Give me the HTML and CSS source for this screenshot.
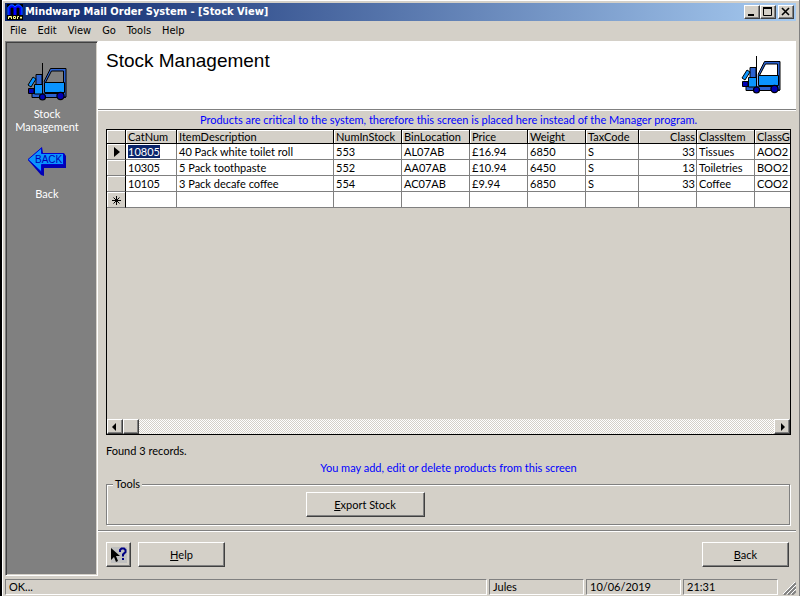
FILE: index.html
```html
<!DOCTYPE html>
<html lang="en">
<head>
<meta charset="utf-8">
<title>Mindwarp Mail Order System - [Stock View]</title>
<link rel="stylesheet" href="styles.css">
</head>
<body>
<svg class="defs" aria-hidden="true">
  <symbol id="forklift" viewBox="0 0 40 40">
    <path d="M9 12.500H15V32H9Z" fill="#2b62d0" stroke="#000"/>
    <path d="M6 15L9 17L4 25L1 23Z" fill="#0a94ff" stroke="#000"/>
    <path d="M5 31.500H38.500V35.500H5Z" fill="#2b62d0" stroke="#000"/>
    <path d="M7.500 22.500H15.500V32H7.500Z" fill="#0a94ff" stroke="#000"/>
    <path d="M1.500 26.500H7V31.500H1.500Z" fill="#0000b4" stroke="#000"/>
    <path d="M17 19.500L23.500 6.500H39V35H36.500V9H24.500L18.500 20.500Z" fill="#2b62d0" stroke="#000"/>
    <path d="M17 20V32" stroke="#2b62d0"/>
    <path d="M17.500 20.500H37.500V30.500H17.500Z" fill="#0a94ff" stroke="#000"/>
    <path d="M15.500 1V33" stroke="#000"/>
    <circle cx="15.500" cy="35" r="3" fill="#0000b4" stroke="#000" stroke-width="1.200"/>
    <circle cx="33.500" cy="34" r="3.600" fill="#0000b4" stroke="#000" stroke-width="1.200"/>
  </symbol>
</svg>
<div class="window">
  <header class="titlebar">
    <svg class="app-icon" viewBox="0 0 16 16" aria-hidden="true">
      <rect width="16" height="16" fill="#000"/>
      <path d="M2 11V4L4 2H6L8 4V11M8 4L10 2H12L14 4V11" fill="none" stroke="#0000ff" stroke-width="3"/>
      <path d="M1 11V3.500L3.500 1H6L8 3L10 1H12.500L15 3.500V11" fill="none" stroke="#0070ff"/>
      <path d="M1.500 15V12.500H4.500V15M3 12V14M6.500 12.500V14.500H8.500V12.500ZM10.500 15V12.500H12M14 12.500V15M13 13.500H15" fill="none" stroke="#ffff90"/>
    </svg>
    <h1 class="title">Mindwarp Mail Order System - [Stock View]</h1>
    <button class="win-btn" aria-label="Minimize"><svg viewBox="0 0 12 10"><path d="M2 8H8" stroke="#000" stroke-width="2"/></svg></button>
    <button class="win-btn" aria-label="Maximize"><svg viewBox="0 0 12 10"><path d="M1.500 1V8.500H9.500V1" fill="none" stroke="#000"/><path d="M1 1H10" stroke="#000" stroke-width="2"/></svg></button>
    <button class="win-btn close" aria-label="Close"><svg viewBox="0 0 12 10"><path d="M2 1L9 8M9 1L2 8" stroke="#000" stroke-width="1.600"/></svg></button>
  </header>
  <nav class="menu">
    <button>File</button><button>Edit</button><button>View</button><button>Go</button><button>Tools</button><button>Help</button>
  </nav>
  <div class="body">
    <aside class="sidebar">
      <a href="#stock"><svg class="side-icon" aria-hidden="true"><use href="#forklift"/></svg>Stock Management</a>
      <a href="#back"><svg class="side-icon arrow" viewBox="0 0 40 32" aria-hidden="true">
        <path d="M1 14L15 1L16 7H37L39 10V22H17V30L14 29Z" fill="#0000b4"/>
        <path d="M1 13.500L14.500 2V7.500H36.500V18.500H14.500V26Z" fill="#0a94ff" stroke="#0000d0"/>
        <text x="8" y="17" class="arrow-text">BACK</text>
      </svg>Back</a>
    </aside>
    <main class="main">
      <div class="banner">
        <h2>Stock Management</h2>
        <svg class="banner-icon" aria-hidden="true"><use href="#forklift"/></svg>
      </div>
      <section class="content">
        <p class="note">Products are critical to the system, therefore this screen is placed here instead of the Manager program.</p>
        <div class="grid">
          <div class="grid-view">
            <table>
              <colgroup><col class="c-mark"><col class="c-cat"><col class="c-desc"><col class="c-loc"><col class="c-loc"><col class="c-std"><col class="c-std"><col class="c-tax"><col class="c-std"><col class="c-std"><col></colgroup>
              <thead><tr><th></th><th>CatNum</th><th>ItemDescription</th><th>NumInStock</th><th>BinLocation</th><th>Price</th><th>Weight</th><th>TaxCode</th><th class="num">Class</th><th>ClassItem</th><th>ClassG</th></tr></thead>
              <tbody>
                <tr><th><svg class="mark" viewBox="0 0 10 10"><path d="M3 0L9 5L3 10Z"/></svg></th><td><span class="selected">10805</span></td><td>40 Pack white toilet roll</td><td>553</td><td>AL07AB</td><td>£16.94</td><td>6850</td><td>S</td><td class="num">33</td><td>Tissues</td><td>AOO2</td></tr>
                <tr><th></th><td>10305</td><td>5 Pack toothpaste</td><td>552</td><td>AA07AB</td><td>£10.94</td><td>6450</td><td>S</td><td class="num">13</td><td>Toiletries</td><td>BOO2</td></tr>
                <tr><th></th><td>10105</td><td>3 Pack decafe coffee</td><td>554</td><td>AC07AB</td><td>£9.94</td><td>6850</td><td>S</td><td class="num">33</td><td>Coffee</td><td>COO2</td></tr>
                <tr><th><svg class="mark" viewBox="0 0 10 10"><path class="star" d="M5.500 1V10M1 5.500H10M2.500 2.500L8.500 8.500M8.500 2.500L2.500 8.500"/></svg></th><td></td><td></td><td></td><td></td><td></td><td></td><td></td><td></td><td></td><td></td></tr>
              </tbody>
            </table>
          </div>
          <div class="scrollbar">
            <button aria-label="Scroll left"><svg viewBox="0 0 8 8"><path d="M5 0V8L1 4Z"/></svg></button>
            <div class="thumb"></div>
            <button class="right" aria-label="Scroll right"><svg viewBox="0 0 8 8"><path d="M3 0V8L7 4Z"/></svg></button>
          </div>
        </div>
        <p class="found">Found 3 records.</p>
        <p class="note hint">You may add, edit or delete products from this screen</p>
        <fieldset class="tools">
          <legend>Tools</legend>
          <button class="btn export"><u>E</u>xport Stock</button>
        </fieldset>
      </section>
      <footer class="actions">
        <button class="btn whats" aria-label="What's this?"><svg viewBox="0 0 16 16">
          <rect width="16" height="16" fill="#c0c0c0"/>
          <path d="M0 1V13L3 10L5 15L7 14L5 9H9Z"/>
          <path d="M9 5V3L10.500 1.500H13L14.500 3V5L12 7.500V9.500M12 11V13" fill="none" stroke="#000084" stroke-width="2"/>
        </svg></button>
        <button class="btn"><u>H</u>elp</button>
        <button class="btn back"><u>B</u>ack</button>
      </footer>
    </main>
  </div>
  <footer class="status">
    <span class="pane msg">OK...</span><span class="pane">Jules</span><span class="pane">10/06/2019</span><span class="pane">21:31</span>
    <svg class="grip" viewBox="0 0 13 13" aria-hidden="true"><path d="M1 13L13 1M5 13L13 5M9 13L13 9" stroke="#808080" stroke-width="2"/><path d="M0 12L12 0M4 12L13 3M8 12L13 7" stroke="#fff"/></svg>
  </footer>
</div>
</body>
</html>
```
FILE: styles.css
```css
* { box-sizing: border-box; }
:root { --face: #d4d0c8; --shade: #808080; --dark: #404040; }
html, body { height: 100%; }
body {
  margin: 0;
  background: var(--face);
  color: #000;
  font: 11px/14px Lato, "Liberation Sans", sans-serif;
}
h1, h2, p { margin: 0; font-weight: normal; }
button { font: inherit; color: inherit; padding: 0; }
svg { display: block; }
.defs { position: absolute; width: 0; height: 0; }

.window {
  display: flex;
  flex-direction: column;
  min-height: 100%;
  border-left: 2px solid #000;
  border-right: 1px solid var(--shade);
  padding: 1px 3px 0 1px;
  box-shadow: inset 1px 1px #fff;
  overflow: hidden;
}
.titlebar {
  display: flex;
  align-items: center;
  height: 18px;
  margin: 2px 0 0 2px;
  padding: 0 2px;
  background: linear-gradient(90deg, #0a246a, #a6caf0);
}
.app-icon { width: 16px; height: 16px; margin-right: 2px; }
.title {
  flex: 1;
  color: #fff;
  font: bold 11px/18px "DejaVu Sans Condensed", sans-serif;
  white-space: nowrap;
}
.win-btn {
  width: 16px;
  height: 14px;
  border: 1px solid;
  border-color: #fff var(--dark) var(--dark) #fff;
  box-shadow: inset -1px -1px var(--shade);
  background: var(--face);
}
.win-btn svg { width: 12px; height: 10px; margin: 0 1px; }
.close { margin-left: 2px; }

.menu { display: flex; height: 20px; padding-left: 2px; }
.menu button {
  border: 0;
  background: none;
  padding: 0 6px 0 5px;
  font: 11px/20px "DejaVu Sans Condensed", sans-serif;
}

.body { display: flex; flex: 1; padding-left: 2px; }
.sidebar {
  width: 93px;
  background: var(--shade);
  border: 1px solid;
  border-color: #808080 #fff #fff #808080;
  box-shadow: inset 1px 1px var(--dark), inset -1px -1px var(--face);
  padding: 20px 9px 0 0;
}
.sidebar a {
  display: flex;
  flex-direction: column;
  align-items: center;
  margin: 0 8px 13px;
  color: #fff;
  line-height: 13px;
  text-align: center;
  text-decoration: none;
}
.side-icon { width: 40px; height: 40px; margin-bottom: 5px; }
.arrow { height: 32px; margin-bottom: 9px; }
.arrow-text { font: 10px "Liberation Sans", sans-serif; fill: #0000b4; }

.main { display: flex; flex: 1; flex-direction: column; min-width: 0; }
.banner {
  display: flex;
  justify-content: space-between;
  height: 68px;
  padding: 8px 15px 0 8px;
  background: #fff;
}
.banner h2 { font: 19px/24px "Liberation Sans", Arial, sans-serif; }
.banner-icon { width: 40px; height: 40px; margin-top: 6px; }
.content {
  display: flex;
  flex: 1;
  flex-direction: column;
  padding: 3px 5px 5px 8px;
  border-top: 1px solid var(--shade);
  box-shadow: inset 0 1px #fff;
}
.note { color: #00f; text-align: center; }
.content > .note { margin-bottom: 2px; }
.grid {
  display: flex;
  flex: 1;
  flex-direction: column;
  border: 1px solid #000;
}
.grid-view { flex: 1; overflow: hidden; }
table { width: 100%; border-collapse: separate; border-spacing: 0; table-layout: fixed; }
.c-mark { width: 19px; }
.c-cat { width: 51px; }
.c-desc { width: 157px; }
.c-loc { width: 68px; }
.c-std { width: 58px; }
.c-tax { width: 53px; }
th, td {
  height: 16px;
  padding: 0 1px 0 2px;
  border-right: 1px solid var(--shade);
  border-bottom: 1px solid var(--shade);
  background: #fff;
  font-weight: normal;
  line-height: 15px;
  text-align: left;
  white-space: nowrap;
  overflow: hidden;
}
tr > :last-child { border-right: 0; padding-right: 0; }
th {
  background: var(--face);
  border-right-color: #000;
  box-shadow: inset 1px 1px #fff;
}
thead th { height: 14px; line-height: 13px; border-color: #000; }
.num { text-align: right; }
.selected { display: inline-block; background: #0a246a; color: #fff; line-height: 13px; }
.mark { width: 10px; height: 10px; margin-left: 2px; }
.star { fill: none; stroke: #000; stroke-width: 1; }
.scrollbar {
  display: flex;
  height: 15px;
  background: repeating-conic-gradient(#fff 0 25%, var(--face) 0 50%) 0 0 / 2px 2px;
}
.scrollbar button, .thumb {
  width: 16px;
  border: 1px solid;
  border-color: #fff var(--dark) var(--dark) #fff;
  box-shadow: inset -1px -1px var(--shade);
  background: var(--face);
}
.scrollbar svg { width: 8px; height: 8px; margin: 0 auto; }
.scrollbar .right { margin-left: auto; }
.found { margin-top: 9px; }
.hint { margin-top: 3px; }
.tools {
  display: flex;
  justify-content: center;
  height: 48px;
  margin: 0 1px 0 0;
  padding: 1px 0 0;
  border: 1px solid var(--shade);
  box-shadow: 1px 1px #fff, inset 1px 1px #fff;
}
.tools legend { margin-left: 6px; padding: 0 2px; background: var(--face); }
.btn {
  width: 87px;
  height: 25px;
  border: 1px solid;
  border-color: #fff var(--dark) var(--dark) #fff;
  box-shadow: inset -1px -1px var(--shade);
  background: var(--face);
}
.export { width: 119px; margin-right: 166px; }
.actions {
  display: flex;
  gap: 7px;
  height: 46px;
  padding: 11px 7px 0 8px;
  border-top: 1px solid var(--shade);
  box-shadow: inset 0 1px #fff;
}
.whats { width: 25px; }
.whats svg { width: 16px; height: 16px; margin: 0 auto; }
.back { margin-left: auto; }

.status { display: flex; gap: 2px; height: 16px; margin: 3px 0 1px 2px; }
.pane {
  width: 95px;
  height: 16px;
  padding-left: 3px;
  border: 1px solid;
  border-color: var(--shade) #fff #fff var(--shade);
}
.msg { flex: 1; }
.grip { width: 13px; height: 13px; margin: 3px 0 0 3px; }
```
